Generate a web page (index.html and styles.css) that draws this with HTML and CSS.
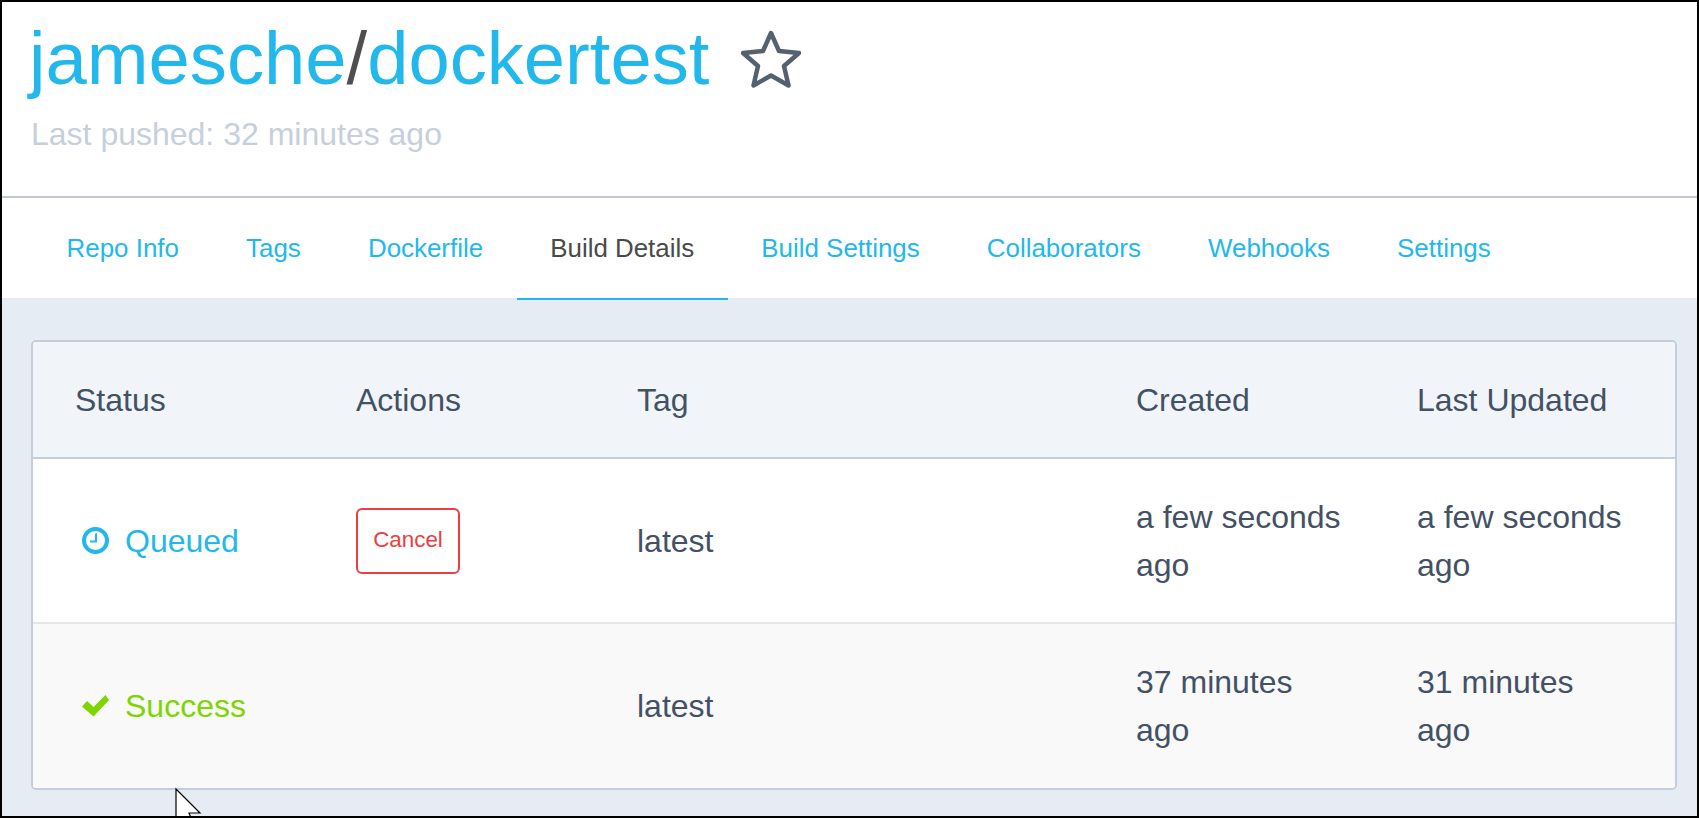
FILE: index.html
```html
<!DOCTYPE html>
<html lang="en">
<head>
  <meta charset="UTF-8">
  <title>jamesche/dockertest - Build Details</title>
  <link rel="stylesheet" href="styles.css">
</head>
<body>

  <div class="frame">
    <header class="repo-header">
      <h1 class="repo-title">
        <a href="#">jamesche</a><span class="slash">/</span><a href="#">dockertest</a>
        <svg class="star" viewBox="0 0 60 58" width="60" height="58" aria-hidden="true">
          <path d="M30 3 L38 21 L58 23 L43 36 L47.5 55.5 L30 45.5 L12.5 55.5 L17 36 L2 23 L22 21 Z" fill="none" stroke="#55616f" stroke-width="4.5" stroke-linejoin="round"/>
        </svg>
      </h1>
      <p class="last-pushed">Last pushed: 32 minutes ago</p>
    </header>

    <nav class="tabs">
      <a href="#">Repo Info</a>
      <a href="#">Tags</a>
      <a href="#">Dockerfile</a>
      <a href="#" class="active">Build Details</a>
      <a href="#">Build Settings</a>
      <a href="#">Collaborators</a>
      <a href="#">Webhooks</a>
      <a href="#">Settings</a>
    </nav>

    <main class="content">
      <div class="builds">
        <div class="row head">
          <div>Status</div>
          <div>Actions</div>
          <div>Tag</div>
          <div>Created</div>
          <div>Last Updated</div>
        </div>

        <div class="row">
          <div class="status queued">
            <svg viewBox="0 0 27 27" width="27" height="27" aria-hidden="true">
              <circle cx="13.5" cy="13.5" r="11.5" fill="none" stroke="currentColor" stroke-width="4"/>
              <path d="M14 6.5 V14.5 H8" fill="none" stroke="currentColor" stroke-width="2"/>
            </svg>
            Queued
          </div>
          <div><button class="cancel" type="button">Cancel</button></div>
          <div>latest</div>
          <div>a few seconds ago</div>
          <div>a few seconds ago</div>
        </div>

        <div class="row alt">
          <div class="status success">
            <svg viewBox="0 0 27 22" width="27" height="22" aria-hidden="true">
              <path d="M0 11.5 L5 6 L11.5 12 L23.5 0 L27 5 L11.5 21.5 Z" fill="currentColor"/>
            </svg>
            Success
          </div>
          <div></div>
          <div>latest</div>
          <div>37 minutes ago</div>
          <div>31 minutes ago</div>
        </div>
      </div>
    </main>

    <!-- mouse pointer caught in the screenshot, cut off by the frame -->
    <svg class="pointer" viewBox="0 0 28 46" width="28" height="46" aria-hidden="true">
      <path d="M2 3 V38 L9 31 L14 42 L20 39 L15 27 H26 Z" fill="#fff" stroke="#000" stroke-width="1.2"/>
    </svg>
  </div>

</body>
</html>
```

FILE: styles.css
```css
* {
  box-sizing: border-box;
}
html, body {
  height: 100%;
}
body {
  margin: 0;
  font-family: "Liberation Sans", Arial, sans-serif;
  background-color: #000;
  overflow: hidden;
}
a {
  text-decoration: none;
  color: #22b8eb;
}

.frame {
  position: relative;
  height: 818px;
  border: 2px solid #000;
  display: flex;
  flex-direction: column;
  overflow: hidden;
  background-color: #e5ecf4;
}

.repo-header {
  height: 196px;
  flex: none;
  padding: 18px 27px 0;
  background-color: #fff;
  border-bottom: 2px solid #bfc9d4;
}
.repo-title {
  margin: 0;
  font-size: 74.2px;
  line-height: 78px;
  font-weight: 400;
  color: #4f4f4f;
  display: flex;
  align-items: center;
}
.star {
  margin-left: 32px;
}
.last-pushed {
  margin: 18px 0 0 2px;
  font-size: 32px;
  line-height: 36px;
  color: #c7cfdc;
}

.tabs {
  position: relative;
  height: 100px;
  flex: none;
  display: flex;
  padding: 0 0 0 31px;
  background-color: #fff;
}
.tabs a {
  padding: 0 33.6px;
  font-size: 25.9px;
  line-height: 100px;
  height: 102px;
  color: #22b8eb;
}
.tabs a.active {
  color: #4a4a4a;
  border-bottom: 2px solid #22b8eb;
}

.content {
  flex: 1;
  padding: 42px 20px 0 29px;
}
.builds {
  border: 2px solid #c3cddb;
  border-radius: 5px;
  overflow: hidden;
  background-color: #fff;
}
.row {
  display: grid;
  grid-template-columns: 281px 281px 499px 281px 1fr;
  align-items: center;
  height: 166px;
  padding: 0 0 0 42px;
  font-size: 32px;
  line-height: 48px;
  color: #435165;
  border-top: 2px solid #e5e5e5;
}
.row > div {
  padding-right: 70px;
}
.row > div:last-child {
  padding-right: 46px;
}
.row.head {
  height: 117px;
  background-color: #f1f5fa;
  border-top: 0;
  border-bottom: 2px solid #c3cddb;
}
.row.head + .row {
  height: 163px;
  border-top: 0;
}
.row.alt {
  background-color: #f9f9f9;
}

.status {
  display: flex;
  align-items: center;
  gap: 16px;
  padding-left: 7px;
}
.status svg {
  flex: none;
}
.queued {
  color: #22b8eb;
}
.success {
  color: #7ed500;
}

.cancel {
  display: block;
  width: 104px;
  height: 66px;
  padding: 0 0 2px;
  font-family: inherit;
  font-size: 22.4px;
  color: #ee3c43;
  background-color: #fff;
  border: 2px solid #ee3c43;
  border-radius: 6px;
}

.pointer {
  position: absolute;
  left: 172px;
  top: 784px;
}
```
